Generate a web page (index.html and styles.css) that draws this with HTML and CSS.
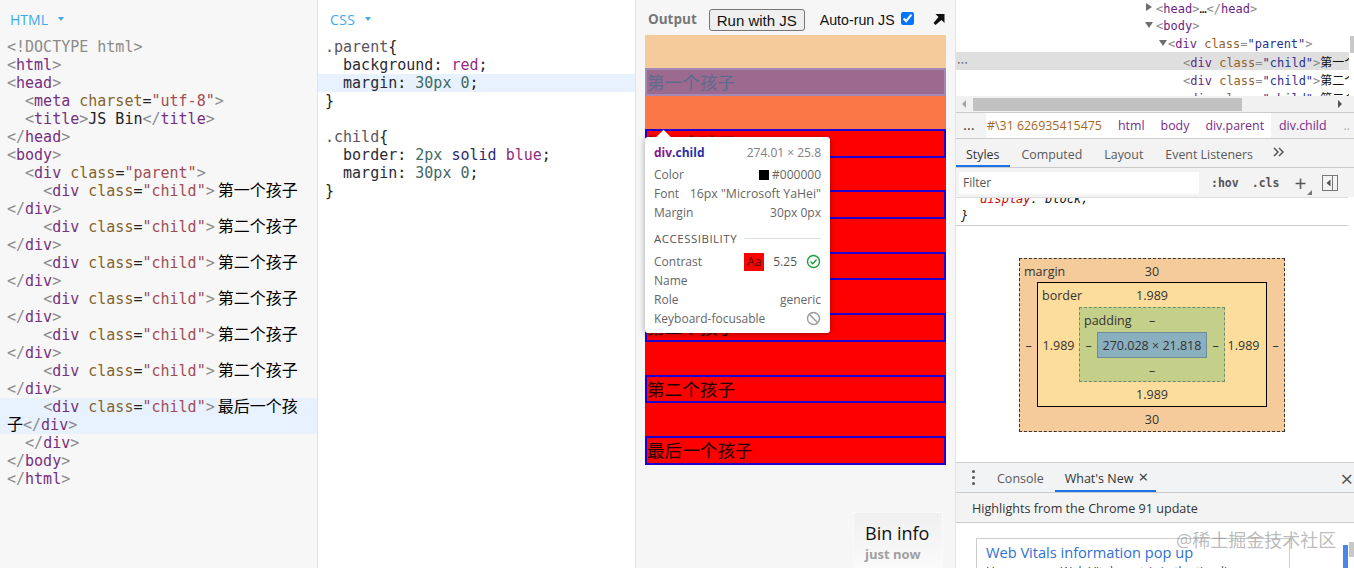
FILE: index.html
```html
<!DOCTYPE html>
<html lang="zh-CN">
<head>
    <meta charset="UTF-8">
    <title>JS Bin</title>
    <link rel="stylesheet" href="styles.css">
</head>
<body>
    <!-- HTML pane -->
    <section class="pane html-pane">
        <div class="pane-head"><span class="pane-title">HTML</span><span class="caret"></span></div>
        <div class="code">
            <div class="line"><span class="b">&lt;!DOCTYPE html&gt;</span></div>
            <div class="line"><span class="b">&lt;</span><span class="t">html</span><span class="b">&gt;</span></div>
            <div class="line"><span class="b">&lt;</span><span class="t">head</span><span class="b">&gt;</span></div>
            <div class="line">  <span class="b">&lt;</span><span class="t">meta</span> <span class="a">charset</span>=<span class="s">"utf-8"</span><span class="b">&gt;</span></div>
            <div class="line">  <span class="b">&lt;</span><span class="t">title</span><span class="b">&gt;</span>JS Bin<span class="b">&lt;/</span><span class="t">title</span><span class="b">&gt;</span></div>
            <div class="line"><span class="b">&lt;/</span><span class="t">head</span><span class="b">&gt;</span></div>
            <div class="line"><span class="b">&lt;</span><span class="t">body</span><span class="b">&gt;</span></div>
            <div class="line">  <span class="b">&lt;</span><span class="t">div</span> <span class="a">class</span>=<span class="s">"parent"</span><span class="b">&gt;</span></div>
            <div class="line">    <span class="b">&lt;</span><span class="t">div</span> <span class="a">class</span>=<span class="s">"child"</span><span class="b">&gt;</span><span class="cjk">第一个孩子</span><span class="b">&lt;/</span><span class="t">div</span><span class="b">&gt;</span></div>
            <div class="line">    <span class="b">&lt;</span><span class="t">div</span> <span class="a">class</span>=<span class="s">"child"</span><span class="b">&gt;</span><span class="cjk">第二个孩子</span><span class="b">&lt;/</span><span class="t">div</span><span class="b">&gt;</span></div>
            <div class="line">    <span class="b">&lt;</span><span class="t">div</span> <span class="a">class</span>=<span class="s">"child"</span><span class="b">&gt;</span><span class="cjk">第二个孩子</span><span class="b">&lt;/</span><span class="t">div</span><span class="b">&gt;</span></div>
            <div class="line">    <span class="b">&lt;</span><span class="t">div</span> <span class="a">class</span>=<span class="s">"child"</span><span class="b">&gt;</span><span class="cjk">第二个孩子</span><span class="b">&lt;/</span><span class="t">div</span><span class="b">&gt;</span></div>
            <div class="line">    <span class="b">&lt;</span><span class="t">div</span> <span class="a">class</span>=<span class="s">"child"</span><span class="b">&gt;</span><span class="cjk">第二个孩子</span><span class="b">&lt;/</span><span class="t">div</span><span class="b">&gt;</span></div>
            <div class="line">    <span class="b">&lt;</span><span class="t">div</span> <span class="a">class</span>=<span class="s">"child"</span><span class="b">&gt;</span><span class="cjk">第二个孩子</span><span class="b">&lt;/</span><span class="t">div</span><span class="b">&gt;</span></div>
            <div class="line active">    <span class="b">&lt;</span><span class="t">div</span> <span class="a">class</span>=<span class="s">"child"</span><span class="b">&gt;</span><span class="cjk">最后一个孩子</span><span class="b">&lt;/</span><span class="t">div</span><span class="b">&gt;</span></div>
            <div class="line">  <span class="b">&lt;/</span><span class="t">div</span><span class="b">&gt;</span></div>
            <div class="line"><span class="b">&lt;/</span><span class="t">body</span><span class="b">&gt;</span></div>
            <div class="line"><span class="b">&lt;/</span><span class="t">html</span><span class="b">&gt;</span></div>
        </div>
    </section>

    <!-- CSS pane -->
    <section class="pane css-pane">
        <div class="pane-head"><span class="pane-title">CSS</span><span class="caret"></span></div>
        <div class="code">
            <div class="line"><span class="sel">.parent</span>{</div>
            <div class="line">  <span class="prop">background</span>: <span class="kw">red</span>;</div>
            <div class="line active">  <span class="prop">margin</span>: <span class="num">30px</span> <span class="num">0</span>;</div>
            <div class="line">}</div>
            <div class="line">&nbsp;</div>
            <div class="line"><span class="sel">.child</span>{</div>
            <div class="line">  <span class="prop">border</span>: <span class="num">2px</span> <span class="val">solid</span> <span class="kw">blue</span>;</div>
            <div class="line">  <span class="prop">margin</span>: <span class="num">30px</span> <span class="num">0</span>;</div>
            <div class="line">}</div>
        </div>
    </section>

    <!-- Output pane -->
    <section class="output">
        <div class="output-head">
            <span class="output-title">Output</span>
            <button class="run-btn">Run with JS</button>
            <label class="autorun">Auto-run JS <input type="checkbox" checked></label>
            <svg class="popout" width="12" height="12" viewBox="0 0 12 12"><path d="M2.5 1h9v9l-3-3-6 5-2-2 5-6z" fill="#111"/></svg>
        </div>
        <div class="frame">
            <div class="hl-margin-top"></div>
            <div class="hl-child">第一个孩子</div>
            <div class="hl-margin-bottom"></div>
            <div class="parent">
                <div class="child">第二个孩子</div>
                <div class="child">第二个孩子</div>
                <div class="child">第二个孩子</div>
                <div class="child">第二个孩子</div>
                <div class="child">第二个孩子</div>
                <div class="child">最后一个孩子</div>
            </div>
            <div class="tooltip">
                <div class="tip-arrow"></div>
                <div class="tip-row tip-title"><span><b class="tip-tag">div</b><b class="tip-class">.child</b></span><span>274.01 × 25.8</span></div>
                <div class="tip-row"><span>Color</span><span class="tip-color"><i class="swatch"></i>#000000</span></div>
                <div class="tip-row"><span>Font</span><span class="tip-font">16px "Microsoft YaHei"</span></div>
                <div class="tip-row"><span>Margin</span><span>30px 0px</span></div>
                <div class="tip-section"><span>ACCESSIBILITY</span><i class="tip-rule"></i></div>
                <div class="tip-row"><span>Contrast</span><span class="tip-contrast"><i class="aa">Aa</i><span class="ratio">5.25</span>
                    <svg width="15" height="15" viewBox="0 0 15 15"><circle cx="7.5" cy="7.5" r="6" fill="none" stroke="#1a9e3c" stroke-width="1.4"/><path d="M4.5 7.5l2.2 2.2 3.8-4" fill="none" stroke="#1a9e3c" stroke-width="1.4"/></svg></span></div>
                <div class="tip-row"><span>Name</span></div>
                <div class="tip-row"><span>Role</span><span>generic</span></div>
                <div class="tip-row"><span>Keyboard-focusable</span>
                    <svg width="15" height="15" viewBox="0 0 15 15"><circle cx="7.5" cy="7.5" r="6" fill="none" stroke="#999" stroke-width="1.4"/><path d="M3.3 3.3l8.4 8.4" stroke="#999" stroke-width="1.4"/></svg></div>
            </div>
        </div>
        <div class="bin-info">
            <div class="bin-title">Bin info</div>
            <div class="bin-time">just now</div>
        </div>
    </section>

    <!-- DevTools -->
    <section class="devtools">
        <div class="elements">
            <div class="el-lines">
                <div class="el first"><i class="tri-right"></i><span class="b">&lt;</span><span class="t">head</span><span class="b">&gt;</span>…<span class="b">&lt;/</span><span class="t">head</span><span class="b">&gt;</span></div>
                <div class="el"><i class="tri-down"></i><span class="b">&lt;</span><span class="t">body</span><span class="b">&gt;</span></div>
                <div class="el depth2"><i class="tri-down"></i><span class="b">&lt;</span><span class="t">div</span> <span class="a">class</span><span class="b">=</span><span class="v">"parent"</span><span class="b">&gt;</span></div>
                <div class="el depth3 selected"><span class="dots">•••</span><span class="b">&lt;</span><span class="t">div</span> <span class="a">class</span><span class="b">=</span><span class="v">"child"</span><span class="b">&gt;</span>第一个孩子</div>
                <div class="el depth3"><span class="b">&lt;</span><span class="t">div</span> <span class="a">class</span><span class="b">=</span><span class="v">"child"</span><span class="b">&gt;</span>第二个孩子</div>
                <div class="el depth3"><span class="b">&lt;</span><span class="t">div</span> <span class="a">class</span><span class="b">=</span><span class="v">"child"</span><span class="b">&gt;</span>第二个孩子</div>
            </div>
            <div class="el-vscroll"><div class="el-vthumb"></div></div>
        </div>
        <div class="hscroll">
            <i class="arrow-left"></i>
            <div class="hthumb"></div>
            <i class="arrow-right"></i>
        </div>
        <div class="crumbs">
            <span class="crumb-more">…</span>
            <div class="crumb-main">
                <span class="crumb-id">#\31 626935415475</span>
                <span class="crumb-el">html</span>
                <span class="crumb-el">body</span>
                <span class="crumb-el">div.parent</span>
            </div>
            <span class="crumb-el crumb-last">div.child</span>
            <span class="crumb-end">..</span>
        </div>
        <div class="tabs">
            <span class="tab current">Styles</span>
            <span class="tab">Computed</span>
            <span class="tab">Layout</span>
            <span class="tab">Event Listeners</span>
            <svg class="tab-more" width="11" height="10" viewBox="0 0 11 10"><path d="M1 1l4 4-4 4M6 1l4 4-4 4" fill="none" stroke="#555" stroke-width="1.5"/></svg>
        </div>
        <div class="filter-row">
            <div class="filter">Filter</div>
            <span class="filter-btn">:hov</span>
            <span class="filter-btn">.cls</span>
            <span class="filter-plus">+<i class="plus-corner"></i></span>
            <svg class="filter-side" width="16" height="16" viewBox="0 0 16 16"><rect x=".5" y=".5" width="15" height="15" fill="none" stroke="#777"/><path d="M10.5 1v14" stroke="#777"/><path d="M8.5 4.5v7l-4-3.5z" fill="#555"/></svg>
        </div>
        <div class="rules">
            <div class="rule-decl"><span class="rule-name">display</span>: block;</div>
            <div class="rule-end">}</div>
        </div>
        <div class="metrics">
            <div class="bm bm-margin">
                <span class="bm-label">margin</span>
                <span class="bm-top">30</span>
                <span class="bm-left">–</span>
                <div class="bm bm-border">
                    <span class="bm-label">border</span>
                    <span class="bm-top">1.989</span>
                    <span class="bm-left">1.989</span>
                    <div class="bm bm-padding">
                        <span class="bm-label">padding</span>
                        <span class="bm-top">–</span>
                        <span class="bm-left">–</span>
                        <div class="bm-content">270.028 × 21.818</div>
                        <span class="bm-right">–</span>
                        <span class="bm-bottom">–</span>
                    </div>
                    <span class="bm-right">1.989</span>
                    <span class="bm-bottom">1.989</span>
                </div>
                <span class="bm-right">–</span>
                <span class="bm-bottom">30</span>
            </div>
        </div>
        <div class="drawer">
            <div class="drawer-tabs">
                <span class="kebab"><i></i><i></i><i></i></span>
                <span class="drawer-tab">Console</span>
                <span class="drawer-tab current">What's New<span class="tab-x">×</span></span>
                <span class="drawer-close">×</span>
            </div>
            <div class="drawer-title">Highlights from the Chrome 91 update</div>
            <div class="drawer-body">
                <div class="card">
                    <div class="card-title">Web Vitals information pop up</div>
                    <div class="card-text">Hover over a Web Vitals metric in the timeline</div>
                </div>
                <div class="drawer-thumb"></div>
                <div class="drawer-vthumb"></div>
            </div>
        </div>
        <div class="watermark">@稀土掘金技术社区</div>
    </section>
</body>
</html>
```
FILE: styles.css
```css
* {
    box-sizing: border-box;
}
body {
    margin: 0;
    height: 568px;
    overflow: hidden;
    display: flex;
    font-family: "Open Sans", "Noto Sans CJK SC", sans-serif;
    background: #fff;
    color: #111;
}
i {
    font-style: normal;
}

/* editor panes */
.pane {
    width: 318px;
    flex: none;
    border-right: 1px solid #e3e3e3;
}
.html-pane {
    background: #f7f7f7;
}
.css-pane {
    background: #fff;
}
.pane-head {
    height: 38px;
    padding-left: 10px;
    display: flex;
    align-items: center;
}
.css-pane .pane-head {
    padding-left: 12px;
}
.pane-title {
    font-size: 14px;
    color: #3fa7f0;
}
.css-pane .pane-title {
    letter-spacing: 0.4px;
}
.caret {
    margin-left: 10px;
    border-left: 3px solid transparent;
    border-right: 3px solid transparent;
    border-top: 4px solid #3fa7f0;
}
.code {
    font: 15px/18px "DejaVu Sans Mono", "Noto Sans CJK SC", monospace;
    color: #222;
}
.line {
    padding: 0 10px 0 7px;
    min-height: 18px;
    white-space: pre-wrap;
}
.line.active {
    background: #e8f2fe;
}
.b { color: #8b8b8b; }
.t { color: #752f80; }
.a { color: #83642e; }
.s { color: #9f4d55; }
.v { color: #28338f; }
.cjk {
    margin-left: 3px;
    font-family: "Noto Sans CJK SC", sans-serif;
    font-size: 16px;
    line-height: 0;
    color: #000;
}
.sel { color: #5a5560; }
.prop { color: #2b2b35; }
.kw { color: #8f2d7d; }
.num { color: #3f6a66; }
.val { color: #2a2a6e; }

/* output */
.output {
    width: 320px;
    flex: none;
    background: #f6f6f7;
    position: relative;
}
.output-head {
    height: 35px;
    display: flex;
    align-items: center;
    padding: 5px 0 0 12px;
}
.output-title {
    margin-top: -2px;
    font-size: 13.5px;
    font-weight: 700;
    color: #777;
}
.run-btn {
    margin-left: 12px;
    width: 96px;
    height: 22px;
    padding: 0;
    font: 15px "Liberation Sans", sans-serif;
    background: #efefef;
    border: 1px solid #767676;
    border-radius: 3px;
    color: #111;
}
.autorun {
    margin-left: 15px;
    font: 14.2px "Liberation Sans", sans-serif;
    display: flex;
    align-items: center;
}
.autorun input {
    margin: -4px 0 0 6px;
    width: 13px;
    height: 13px;
    accent-color: #0075ff;
}
.popout {
    margin: -2px 0 0 19px;
}
.frame {
    margin-left: 9px;
    width: 301px;
    height: 430px;
    font: 17.6px/24px "Noto Sans CJK SC", sans-serif;
    position: relative;
}
.hl-margin-top {
    height: 33px;
    background: #f5cb9c;
}
.hl-child {
    height: 28px;
    background: #9c6a8e;
    border: 2px solid #a488b5;
    color: #5d6a8e;
}
.hl-margin-bottom {
    height: 33px;
    background: #fb7748;
}
.parent {
    background: #f00;
    display: flex;
    flex-direction: column;
    gap: 32.8px;
}
.child {
    height: 28.6px;
    border: 2px solid #1f00cf;
    color: #200;
    white-space: nowrap;
}
.tooltip {
    position: absolute;
    left: 0;
    top: 102px;
    width: 185px;
    height: 196px;
    padding: 5px 9px 0;
    background: #fff;
    border-radius: 3px;
    box-shadow: 0 1px 6px rgba(0, 0, 0, 0.35);
    font: 12px/19px "Open Sans", sans-serif;
    color: #666;
}
.tip-arrow {
    position: absolute;
    left: 13px;
    top: -5px;
    width: 11px;
    height: 11px;
    background: #fff;
    transform: rotate(45deg);
}
.tip-row {
    position: relative;
    display: flex;
    justify-content: space-between;
    align-items: center;
    height: 19px;
    white-space: nowrap;
}
.tip-title {
    height: 20px;
    margin-bottom: 3px;
    color: #808080;
}
.tip-font {
    font-size: 12.3px;
}
.tip-tag { color: #881391; }
.tip-class { color: #2a2fa5; }
.tip-color {
    display: flex;
    align-items: center;
}
.swatch {
    width: 10px;
    height: 10px;
    margin-right: 3px;
    background: #000;
}
.tip-section {
    display: flex;
    align-items: center;
    margin: 7px 0 4px;
    height: 19px;
    font-size: 11.5px;
    letter-spacing: 0.5px;
    color: #555;
}
.tip-rule {
    flex: 1;
    height: 1px;
    margin-left: 7px;
    background: #ddd;
}
.tip-contrast {
    display: flex;
    align-items: center;
}
.aa {
    width: 20px;
    height: 18px;
    line-height: 18px;
    text-align: center;
    background: #f00;
    color: #500;
}
.ratio {
    margin: 0 9px;
    color: #555;
}
.bin-info {
    position: absolute;
    left: 217px;
    top: 512px;
    width: 90px;
    height: 56px;
    padding: 9px 0 0 11px;
    border: 1px solid #fafafa;
    background: linear-gradient(#f0f0f0, #fafafa);
}
.bin-title {
    font-size: 18px;
    line-height: 22px;
    color: #111;
}
.bin-time {
    margin-top: 3px;
    font-size: 13px;
    line-height: 15px;
    font-weight: 700;
    color: #a0a0a0;
}

/* devtools */
.devtools {
    flex: 1;
    min-width: 0;
    position: relative;
    font-size: 12px;
    border-left: 1px solid #e4e4e4;
    margin-left: -1px;
}
.elements {
    height: 96px;
    display: flex;
    overflow: hidden;
}
.el-lines {
    flex: 1;
    min-width: 0;
    font: 12px/19px "DejaVu Sans Mono", "Noto Sans CJK SC", monospace;
    white-space: nowrap;
}
.el {
    height: 18px;
    padding-left: 200px;
    position: relative;
    overflow: hidden;
    color: #111;
}
.el.first {
    height: 17px;
    line-height: 18px;
}
.el.depth2 {
    padding-left: 212px;
    height: 17px;
}
.el.depth3 {
    padding-left: 227px;
    line-height: 22px;
}
.el.selected {
    background: #dfdfdf;
}
.el .a { color: #94602a; }
.el .t { color: #6a1f85; }
.dots {
    position: absolute;
    left: 1px;
    top: 0;
    font-size: 6px;
    color: #666;
}
.tri-right, .tri-down {
    position: absolute;
    top: 5px;
    width: 0;
    height: 0;
}
.tri-right {
    left: 190px;
    border-top: 4px solid transparent;
    border-bottom: 4px solid transparent;
    border-left: 6px solid #6e6e6e;
    top: 3px;
}
.tri-down {
    left: 189px;
    border-left: 4px solid transparent;
    border-right: 4px solid transparent;
    border-top: 6px solid #6e6e6e;
}
.depth2 .tri-down {
    left: 203px;
}
.el-vscroll {
    width: 5px;
    flex: none;
    background: #fff;
}
.el-vthumb {
    margin: 36px 0 0 1px;
    height: 17px;
    background: #c8c8c8;
}
.hscroll {
    height: 17px;
    display: flex;
    align-items: center;
    padding-left: 6px;
    background: #f1f1f1;
    border-bottom: 1px solid #ccc;
}
.arrow-left {
    border-top: 4px solid transparent;
    border-bottom: 4px solid transparent;
    border-right: 4px solid #a3a3a3;
}
.hthumb {
    margin-left: 7px;
    width: 269px;
    height: 13px;
    background: #c1c1c1;
}
.arrow-right {
    margin-left: 96px;
    border-top: 4px solid transparent;
    border-bottom: 4px solid transparent;
    border-left: 4px solid #505050;
}
.crumbs {
    height: 26px;
    display: flex;
    align-items: center;
    background: #f3f3f3;
    border-bottom: 1px solid #ccc;
    white-space: nowrap;
    font-size: 12.4px;
}
.crumb-more {
    width: 30px;
    padding: 0 0 4px 7px;
    font-size: 15px;
    color: #444;
}
.crumb-main {
    display: flex;
    width: 285px;
    height: 25px;
    align-items: center;
    background: #fff;
    padding-left: 1px;
    gap: 16px;
}
.crumb-id { color: #a5651d; }
.crumb-el { color: #7a2a8a; }
.crumb-last { margin-left: 8px; }
.crumb-end {
    margin-left: 17px;
    color: #aaa;
}
.tabs {
    height: 29px;
    display: flex;
    align-items: center;
    background: #f3f3f3;
    border-bottom: 1px solid #ccc;
    color: #5a5a5a;
    font-size: 12.4px;
}
.tab {
    padding: 0 11px;
    height: 28px;
    line-height: 31px;
    white-space: nowrap;
}
.tab.current {
    color: #333;
    padding-left: 10px;
    border-bottom: 2px solid #1a73e8;
}
.tab-more {
    margin: -3px 0 0 9px;
}
.filter-row {
    height: 29px;
    display: flex;
    align-items: center;
    background: #f3f3f3;
    padding: 1px 0 0 3px;
    color: #555;
}
.filter {
    width: 240px;
    height: 22px;
    line-height: 22px;
    padding-left: 4px;
    background: #fff;
}
.filter-btn {
    margin-left: 12px;
    font: 700 11.5px "DejaVu Sans Mono", monospace;
    color: #555;
}
.filter-btn + .filter-btn {
    margin-left: 13px;
}
.filter-plus {
    position: relative;
    margin-left: 15px;
    font-size: 21px;
    line-height: 22px;
}
.plus-corner {
    position: absolute;
    right: -6px;
    bottom: -1px;
    border-left: 5px solid transparent;
    border-bottom: 5px solid #777;
}
.filter-side {
    margin-left: 16px;
}
.rules {
    height: 29px;
    font: italic 12px/18px "DejaVu Sans Mono", monospace;
    border-top: 1px solid #ddd;
    border-bottom: 1px solid #ccc;
    overflow: hidden;
    width: 392px;
}
.rule-decl {
    height: 9px;
    margin-top: -8px;
    padding-left: 24px;
}
.rule-name { color: #c80000; }
.rule-end {
    margin-top: 8px;
    padding-left: 5px;
}

/* box model */
.metrics {
    height: 235px;
    padding: 32px 0 0 63px;
    color: #333;
    font-size: 12.5px;
    line-height: 16px;
}
.bm {
    display: grid;
    position: relative;
    text-align: center;
    align-items: center;
}
.bm > span {
    padding-top: 2px;
}
.bm-margin {
    width: 266px;
    height: 174px;
    grid-template-columns: 17px 230px 17px;
    grid-template-rows: 23px 125px 24px;
    background: #f6cb9b;
    border: 1px dashed #333;
}
.bm-border {
    grid-template-columns: 41px 146px 41px;
    grid-template-rows: 24px 75px 24px;
    background: #fddd9b;
    border: 1px solid #000;
    height: 125px;
}
.bm-padding {
    grid-template-columns: 17px 110px 17px;
    grid-template-rows: 24px 26px 23px;
    background: #c4cf8a;
    border: 1px dashed #6f8a6f;
    height: 75px;
}
.bm-content {
    height: 26px;
    line-height: 26px;
    background: #8aafbf;
    border: 1px solid #6d8b98;
    white-space: nowrap;
}
.bm > .bm-label {
    position: absolute;
    left: 4px;
    top: 3px;
}
.bm-top, .bm-bottom {
    grid-column: 2;
}
.bm-top { grid-row: 1; }
.bm-bottom { grid-row: 3; }
.bm > .bm-left { grid-column: 1; grid-row: 2; }
.bm > .bm-right { grid-column: 3; grid-row: 2; }
.bm > .bm, .bm > .bm-content { grid-column: 2; grid-row: 2; }
.bm-border > .bm-right {
    padding-right: 4px;
}

/* drawer */
.drawer {
    position: absolute;
    left: 0;
    right: 0;
    top: 462px;
    bottom: 0;
    border-top: 1px solid #ccc;
    overflow: hidden;
}
.drawer-tabs {
    height: 30px;
    display: flex;
    align-items: center;
    background: #f1f3f4;
    border-bottom: 1px solid #ccc;
    color: #5a5a5a;
    font-size: 12.5px;
}
.kebab {
    width: 41px;
    padding-left: 16px;
    display: flex;
    flex-direction: column;
    gap: 3px;
}
.kebab i {
    width: 3px;
    height: 3px;
    border-radius: 50%;
    background: #555;
}
.drawer-tab {
    padding-right: 11px;
    height: 29px;
    line-height: 31px;
}
.drawer-tab.current {
    padding: 0 0 0 10px;
    width: 101px;
    white-space: nowrap;
    border-bottom: 2px solid #1a73e8;
    color: #333;
}
.tab-x {
    margin-left: 5px;
    font-size: 17px;
    line-height: 17px;
}
.drawer-close {
    margin-left: auto;
    margin-right: 1px;
    font-size: 22px;
    line-height: 22px;
    color: #555;
}
.drawer-title {
    height: 30px;
    line-height: 31px;
    padding-left: 16px;
    background: #f3f3f3;
    border-bottom: 1px solid #ccc;
    font-size: 12.6px;
    color: #333;
}
.drawer-body {
    height: 45px;
    padding: 15px 0 0 20px;
    position: relative;
}
.card {
    width: 314px;
    height: 30px;
    padding: 3px 9px 0;
    border: 1px solid #ccc;
    border-bottom: none;
    overflow: hidden;
    white-space: nowrap;
}
.card-title {
    font-size: 14.6px;
    line-height: 20px;
    color: #2f6fd1;
}
.card-text {
    margin-top: 1px;
    color: #444;
}
.drawer-thumb {
    position: absolute;
    right: 6px;
    top: 22px;
    width: 5px;
    height: 23px;
    background: #4a86e8;
}
.drawer-vthumb {
    position: absolute;
    right: 0;
    top: 19px;
    width: 5px;
    height: 15px;
    background: #c8c8c8;
}
.watermark {
    position: absolute;
    left: 220px;
    top: 527px;
    font-size: 18px;
    line-height: 26px;
    white-space: nowrap;
    color: rgba(130, 130, 130, 0.55);
}
```
